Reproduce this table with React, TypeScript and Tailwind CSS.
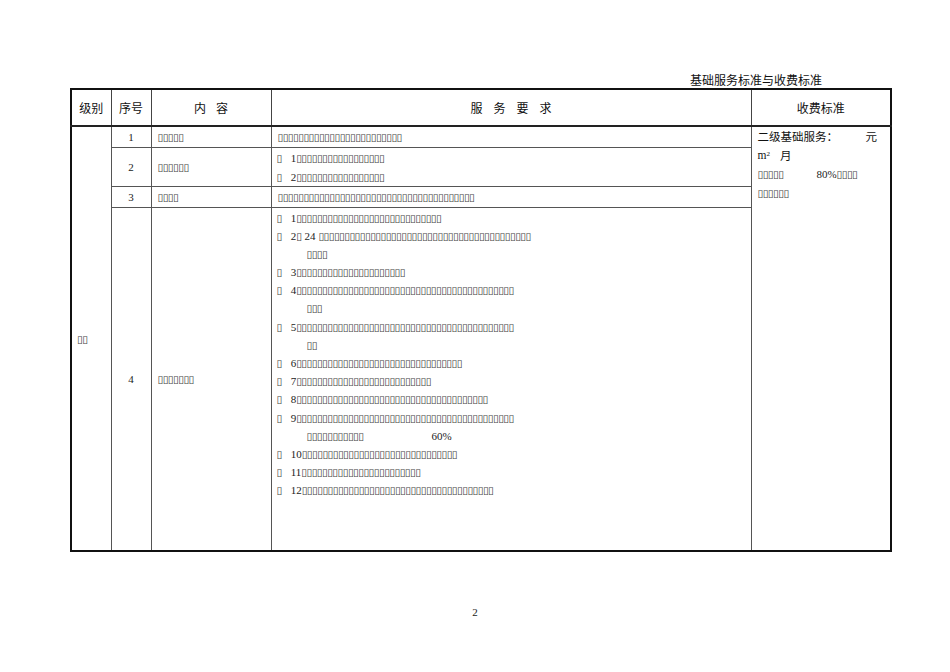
import React from "react";

const T = (n: number) => "\u25AF".repeat(n);

function Tofu({ n, className = "" }: { n: number; className?: string }) {
  return (
    <span className={"font-['DejaVu_Sans'] text-[10.5px] leading-[12px] tracking-[-0.6px] text-[#444] " + className}>
      {T(n)}
    </span>
  );
}

function Num({ children }: { children: React.ReactNode }) {
  return <span className="font-['Liberation_Serif'] text-[11px] leading-[12px] text-[#222]">{children}</span>;
}

function Item({ num, n, pre, cont, contExtra }: { num: string; n: number; pre?: React.ReactNode; cont?: number; contExtra?: React.ReactNode }) {
  return (
    <>
      <div className="h-[18.2px] leading-[18.2px] whitespace-nowrap">
        <Tofu n={1} />
        <span className="ml-[9px]"><Num>{num}</Num></span>
        {pre}
        <Tofu n={n} />
      </div>
      {cont ? (
        <div className="h-[18.2px] leading-[18.2px] pl-[30px] whitespace-nowrap">
          <Tofu n={cont} />
          {contExtra}
        </div>
      ) : null}
    </>
  );
}

export default function App() {
  const cjk = "font-['Noto_Sans_CJK_SC',sans-serif]";
  const th = "border border-[#444] p-0 text-[12px] leading-[14px] text-[#111] font-normal text-center align-middle " + cjk;
  const td = "border border-[#555] p-0 text-[11px] leading-[14px] align-middle";
  return (
    <div className="w-[950px] h-[672px] bg-white relative">
      <div className="pt-[72px] pl-[70px]">
        <div className={"w-[820px] text-right pr-[68px] text-[12px] leading-[16px] text-[#111] " + cjk}>
          基础服务标准与收费标准
        </div>
        <table className="w-[820px] border-collapse border-2 border-[#111] table-fixed">
          <colgroup>
            <col className="w-[40px]" />
            <col className="w-[40px]" />
            <col className="w-[120px]" />
            <col className="w-[480px]" />
            <col className="w-[140px]" />
          </colgroup>
          <thead>
            <tr className="h-[37px] border-b-2 border-[#222]">
              <th className={th}>级别</th>
              <th className={th}>序号</th>
              <th className={th}>内<span className="ml-[10px]">容</span></th>
              <th className={th}>
                服<span className="ml-[11px]">务</span><span className="ml-[11px]">要</span><span className="ml-[11px]">求</span>
              </th>
              <th className={th}>收费标准</th>
            </tr>
          </thead>
          <tbody>
            <tr className="h-[21px]">
              <td rowSpan={4} className={td + " pl-[5px]"}>
                <Tofu n={2} />
              </td>
              <td className={td + " text-center"}><Num>1</Num></td>
              <td className={td + " pl-[6px]"}><Tofu n={5} /></td>
              <td className={td + " pl-[6px]"}><Tofu n={24} /></td>
              <td rowSpan={4} className={td + " align-top pt-0 pl-[6px] pr-[13px]"}>
                <div className={"h-[19px] leading-[19px] flex justify-between text-[11.5px] text-[#111] " + cjk}>
                  <span>二级基础服务：</span>
                  <span>元</span>
                </div>
                <div className={"h-[19px] leading-[19px] flex text-[11.5px] text-[#111] " + cjk}>
                  <span className="font-['Liberation_Serif']">m<sup className="text-[7px]">2</sup></span>
                  <span className="ml-[10px]">月</span>
                </div>
                <div className="h-[18.5px] leading-[18.5px] whitespace-nowrap">
                  <Tofu n={5} />
                  <span className="ml-[33px]"><Num>80%</Num></span>
                  <Tofu n={4} />
                </div>
                <div className="h-[18.5px] leading-[18.5px]">
                  <Tofu n={6} />
                </div>
              </td>
            </tr>
            <tr className="h-[39px]">
              <td className={td + " text-center"}><Num>2</Num></td>
              <td className={td + " pl-[6px]"}><Tofu n={6} /></td>
              <td className={td + " pl-[5px]"}>
                <div className="h-[19px] leading-[19px] whitespace-nowrap"><Tofu n={1} /><span className="ml-[9px]"><Num>1</Num></span><Tofu n={17} /></div>
                <div className="h-[19px] leading-[19px] whitespace-nowrap"><Tofu n={1} /><span className="ml-[9px]"><Num>2</Num></span><Tofu n={17} /></div>
              </td>
            </tr>
            <tr className="h-[21px]">
              <td className={td + " text-center"}><Num>3</Num></td>
              <td className={td + " pl-[6px]"}><Tofu n={4} /></td>
              <td className={td + " pl-[6px]"}><Tofu n={38} /></td>
            </tr>
            <tr className="h-[344px]">
              <td className={td + " text-center"}><Num>4</Num></td>
              <td className={td + " pl-[6px]"}><Tofu n={7} /></td>
              <td className={td + " align-top pl-[5px] pt-[1px]"}>
                <Item num="1" n={28} />
                <Item num="2" pre={<><Tofu n={1} /><span className="ml-[3px] mr-[3px]"><Num>24</Num></span></>} n={41} cont={4} />
                <Item num="3" n={21} />
                <Item num="4" n={42} cont={3} />
                <Item num="5" n={42} cont={2} />
                <Item num="6" n={32} />
                <Item num="7" n={26} />
                <Item num="8" n={37} />
                <Item num="9" n={42} cont={11} contExtra={<span className="ml-[68px]"><Num>60%</Num></span>} />
                <Item num="10" n={30} />
                <Item num="11" n={23} />
                <Item num="12" n={37} />
              </td>
            </tr>
          </tbody>
        </table>
        <div className="w-[820px] mt-[51px] text-center pr-[10px] leading-[14px]">
          <Num>2</Num>
        </div>
      </div>
    </div>
  );
}
